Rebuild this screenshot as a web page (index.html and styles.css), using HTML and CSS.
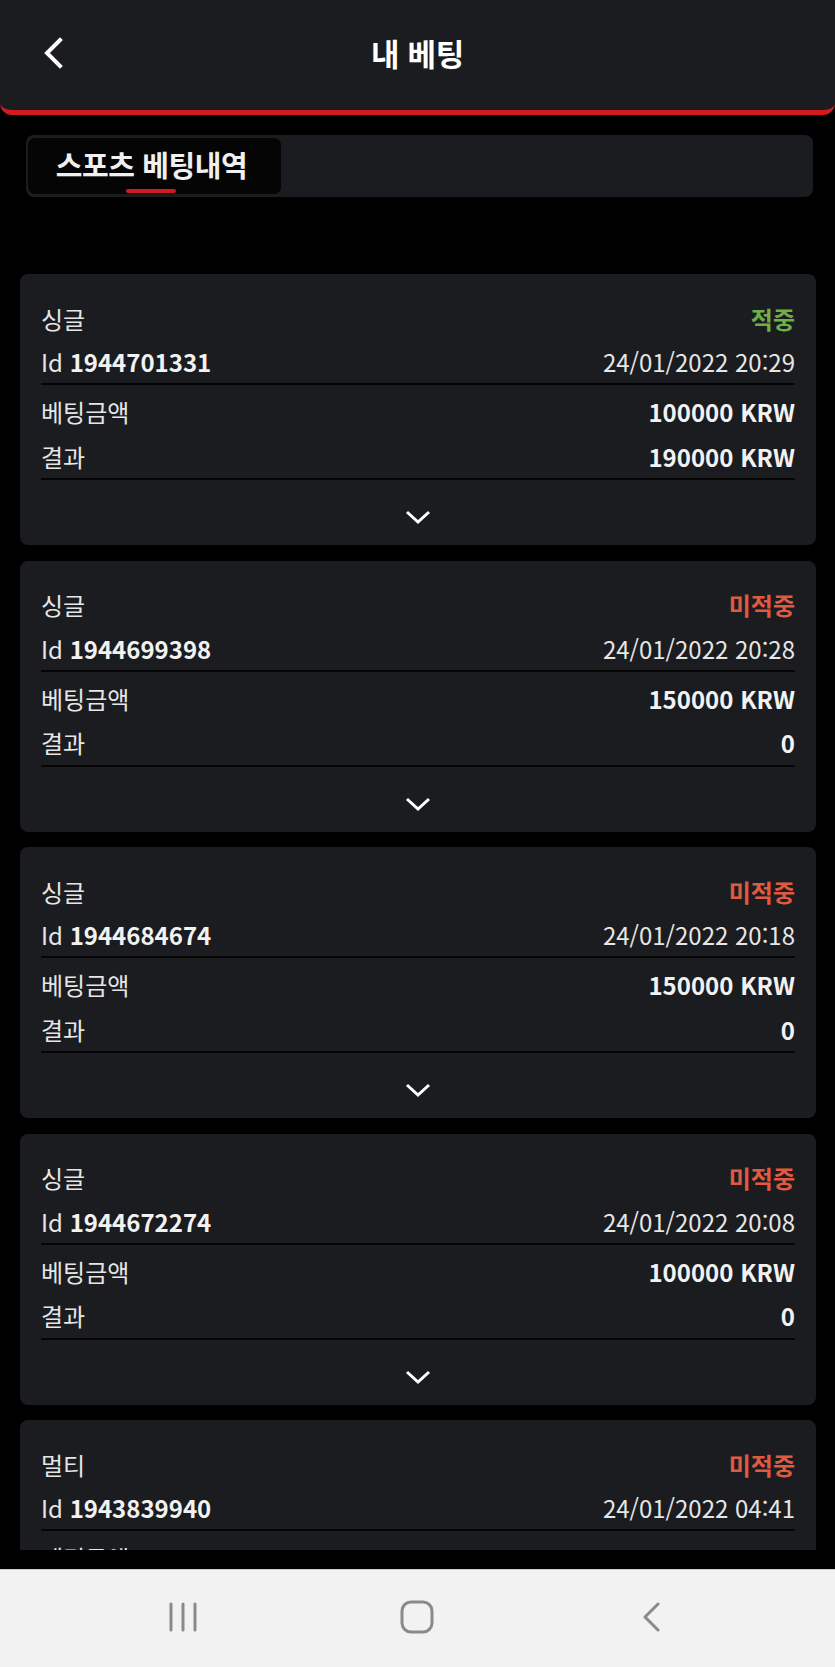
FILE: index.html
```html
<!DOCTYPE html>
<html lang="ko">
<head>
<meta charset="utf-8">
<title>내 베팅</title>
<link rel="stylesheet" href="styles.css">
</head>
<body>
<div class="app">
  <header class="topbar">
    <button class="back" aria-label="뒤로">
      <svg width="22" height="32" viewBox="0 0 22 32"><path d="M18 3 L5 16 L18 29" fill="none" stroke="#fff" stroke-width="4" stroke-linecap="square"/></svg>
    </button>
    <h1 class="title">내 베팅</h1>
  </header>

  <nav class="tabs">
    <div class="tab active">스포츠 베팅내역</div>
  </nav>

  <main class="list">
    <section class="card">
      <div class="row type"><span class="label">싱글</span><span class="status win">적중</span></div>
      <div class="row id"><span>Id <b>1944701331</b></span><span class="date">24/01/2022 20:29</span></div>
      <div class="row amount"><span class="label">베팅금액</span><b>100000 KRW</b></div>
      <div class="row result"><span class="label">결과</span><b>190000 KRW</b></div>
      <div class="more"><svg width="26" height="15" viewBox="0 0 26 15"><path d="M2 2 L13 12 L24 2" fill="none" stroke="#fff" stroke-width="3"/></svg></div>
    </section>

    <section class="card">
      <div class="row type"><span class="label">싱글</span><span class="status lose">미적중</span></div>
      <div class="row id"><span>Id <b>1944699398</b></span><span class="date">24/01/2022 20:28</span></div>
      <div class="row amount"><span class="label">베팅금액</span><b>150000 KRW</b></div>
      <div class="row result"><span class="label">결과</span><b>0</b></div>
      <div class="more"><svg width="26" height="15" viewBox="0 0 26 15"><path d="M2 2 L13 12 L24 2" fill="none" stroke="#fff" stroke-width="3"/></svg></div>
    </section>

    <section class="card">
      <div class="row type"><span class="label">싱글</span><span class="status lose">미적중</span></div>
      <div class="row id"><span>Id <b>1944684674</b></span><span class="date">24/01/2022 20:18</span></div>
      <div class="row amount"><span class="label">베팅금액</span><b>150000 KRW</b></div>
      <div class="row result"><span class="label">결과</span><b>0</b></div>
      <div class="more"><svg width="26" height="15" viewBox="0 0 26 15"><path d="M2 2 L13 12 L24 2" fill="none" stroke="#fff" stroke-width="3"/></svg></div>
    </section>

    <section class="card">
      <div class="row type"><span class="label">싱글</span><span class="status lose">미적중</span></div>
      <div class="row id"><span>Id <b>1944672274</b></span><span class="date">24/01/2022 20:08</span></div>
      <div class="row amount"><span class="label">베팅금액</span><b>100000 KRW</b></div>
      <div class="row result"><span class="label">결과</span><b>0</b></div>
      <div class="more"><svg width="26" height="15" viewBox="0 0 26 15"><path d="M2 2 L13 12 L24 2" fill="none" stroke="#fff" stroke-width="3"/></svg></div>
    </section>

    <section class="card">
      <div class="row type"><span class="label">멀티</span><span class="status lose">미적중</span></div>
      <div class="row id"><span>Id <b>1943839940</b></span><span class="date">24/01/2022 04:41</span></div>
      <div class="row amount"><span class="label">베팅금액</span><b>100000 KRW</b></div>
      <div class="row result"><span class="label">결과</span><b>0</b></div>
      <div class="more"><svg width="26" height="15" viewBox="0 0 26 15"><path d="M2 2 L13 12 L24 2" fill="none" stroke="#fff" stroke-width="3"/></svg></div>
    </section>
  </main>
</div>

<footer class="sysnav">
  <svg width="30" height="30" viewBox="0 0 30 30"><g stroke="#8a8a8a" stroke-width="3" stroke-linecap="round"><path d="M3 2 V28"/><path d="M15 2 V28"/><path d="M27 2 V28"/></g></svg>
  <svg width="34" height="34" viewBox="0 0 34 34"><rect x="2" y="2" width="30" height="30" rx="9" fill="none" stroke="#8a8a8a" stroke-width="3"/></svg>
  <svg width="20" height="30" viewBox="0 0 20 30"><path d="M17 2 L4 15 L17 28" fill="none" stroke="#8a8a8a" stroke-width="3" stroke-linecap="round" stroke-linejoin="round"/></svg>
</footer>
</body>
</html>
```

FILE: styles.css
```css
* { box-sizing: border-box; }

html, body {
  margin: 0;
  padding: 0;
  background: #000;
}

body {
  width: 835px;
  height: 1667px;
  display: flex;
  flex-direction: column;
  font-family: "Noto Sans CJK KR", "Noto Sans", sans-serif;
  color: #e8e8e8;
  overflow: hidden;
}

.app {
  height: 1569px;
  display: flex;
  flex-direction: column;
  padding-bottom: 19px;
}

.topbar {
  position: relative;
  height: 115px;
  flex: none;
  background: #1b1c20;
  border-bottom: 5px solid #d41a1f;
  border-radius: 0 0 12px 12px;
  display: flex;
  align-items: center;
  justify-content: center;
}

.back {
  position: absolute;
  left: 42px;
  top: 37px;
  background: none;
  border: 0;
  padding: 0;
  display: flex;
}

.title {
  margin: 0 0 6px;
  font-size: 31px;
  font-weight: 700;
  color: #fff;
  letter-spacing: -0.3px;
}

.tabs {
  margin: 20px 22px 0 26px;
  height: 62px;
  background: #1b1c20;
  border-radius: 8px;
  padding: 3px 2px;
  display: flex;
  flex: none;
}

.tab {
  width: 253px;
  background: #050505;
  border-radius: 7px;
  font-size: 29px;
  font-weight: 700;
  color: #f0f0f0;
  display: flex;
  align-items: center;
  justify-content: center;
  position: relative;
  padding: 0 6px 4px 0;
  letter-spacing: -0.4px;
}

.tab.active::after {
  content: "";
  position: absolute;
  left: 98px;
  bottom: 1px;
  width: 50px;
  height: 4px;
  border-radius: 2px;
  background: #d41a1f;
}

.list {
  flex: 1;
  overflow: hidden;
  padding: 77px 19px 0 20px;
  display: flex;
  flex-direction: column;
  gap: 15.5px;
}

.card {
  flex: none;
  background: #1b1c20;
  border-radius: 8px;
  padding: 22px 21px 0;
  height: 271px;
}

.row {
  display: flex;
  justify-content: space-between;
  align-items: center;
  font-size: 24px;
  color: #e6e6e6;
}

.row b { font-weight: 700; color: #f2f2f2; }

.row.type { height: 44px; }
.row.id { height: 45px; border-bottom: 2px solid #050506; }
.row.amount { height: 45px; margin-top: 4px; }
.row.result { height: 46px; border-bottom: 2px solid #050506; }

.date { letter-spacing: 0; }

.status { font-weight: 700; }
.status.win { color: #6db046; }
.status.lose { color: #e05a40; }

.more {
  display: flex;
  justify-content: center;
  padding-top: 30px;
}

.sysnav {
  height: 98px;
  flex: none;
  background: #f2f2f2;
  border-top: 1px solid #d0d0d0;
  display: flex;
  align-items: center;
  justify-content: space-between;
  padding: 0 174px 4px 168px;
}

.sysnav svg:nth-child(2) { margin-left: -6px; }
```
